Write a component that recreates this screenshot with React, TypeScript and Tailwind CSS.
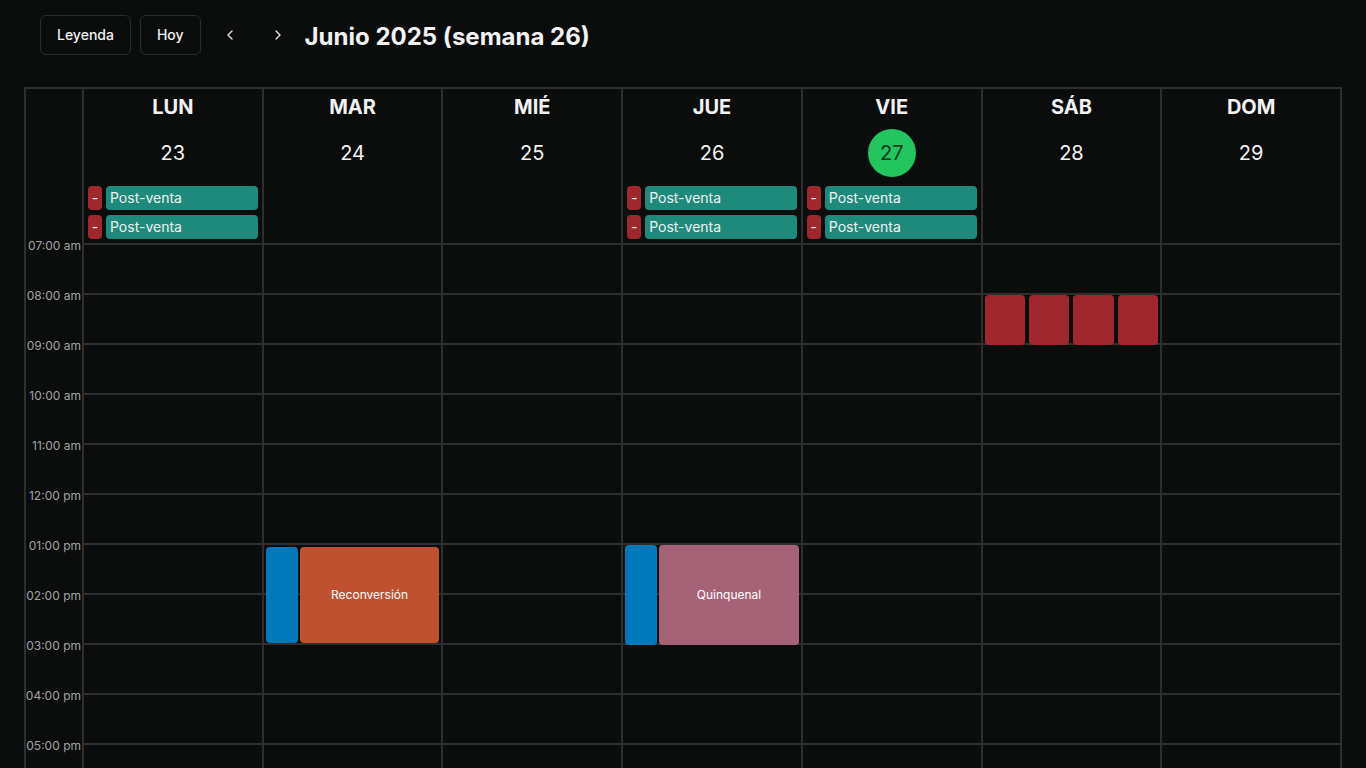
import { ChevronLeft, ChevronRight } from 'lucide-react';

const days = [
  { name: 'LUN', num: 23, allDay: 2 },
  { name: 'MAR', num: 24, allDay: 0 },
  { name: 'MIÉ', num: 25, allDay: 0 },
  { name: 'JUE', num: 26, allDay: 2 },
  { name: 'VIE', num: 27, allDay: 2, today: true },
  { name: 'SÁB', num: 28, allDay: 0 },
  { name: 'DOM', num: 29, allDay: 0 }
];

const hours = [
  '07:00 am', '08:00 am', '09:00 am', '10:00 am', '11:00 am', '12:00 pm',
  '01:00 pm', '02:00 pm', '03:00 pm', '04:00 pm', '05:00 pm', '06:00 pm',
  '07:00 pm', '08:00 pm'
];

const AllDayEvent = () => (
  <div className="flex h-[24px] gap-[4px]">
    <div className="w-[14px] rounded bg-[#a1272f] text-white text-sm flex items-center justify-center">-</div>
    <div className="flex-1 rounded bg-[#1d8a7b] text-[#f2f2f2] text-sm flex items-center pl-[4px]">Post-venta</div>
  </div>
);

// events that sit over the hour grid, keyed by day index and hour index
const renderEvent = (day: number, hour: number) => {
  if (day === 5 && hour === 1) {
    return (
      <div className="absolute left-[2px] right-[2px] top-0 h-[50px] flex gap-[4px] z-10">
        {[0, 1, 2, 3].map((i) => (
          <div key={i} className="flex-1 rounded bg-[#a1272f]"></div>
        ))}
      </div>
    );
  }
  if (day === 1 && hour === 6) {
    return (
      <div className="absolute left-[2px] right-[2px] top-[1.5px] h-[96px] flex gap-[2px] z-10">
        <div className="w-[32px] rounded bg-[#0178b9]"></div>
        <div className="flex-1 rounded bg-[#c05130] text-white text-xs flex items-center justify-center">Reconversión</div>
      </div>
    );
  }
  if (day === 3 && hour === 6) {
    return (
      <div className="absolute left-[2px] right-[2px] top-0 h-[100px] flex gap-[2px] z-10">
        <div className="w-[32px] rounded bg-[#0178b9]"></div>
        <div className="flex-1 rounded bg-[#a66378] text-white text-xs flex items-center justify-center">Quinquenal</div>
      </div>
    );
  }
  return null;
};

const App = () => {
  return (
    <div
      className="h-[768px] overflow-hidden bg-[#0b0d0d] px-6 pt-[15px] text-[#f2f2f2]"
      style={{ fontFamily: 'Inter, "Noto Sans", sans-serif' }}
    >
      {/* Toolbar */}
      <div className="flex items-center gap-[9px] pl-4 h-10">
        <button className="h-10 px-4 rounded-md border border-[#2a2c2c] bg-[#0b0d0d] text-sm font-medium">Leyenda</button>
        <button className="h-10 px-4 rounded-md border border-[#2a2c2c] bg-[#0b0d0d] text-sm font-medium">Hoy</button>
        <button className="h-10 w-10 flex items-center justify-center text-[#e5e5e5]">
          <ChevronLeft size={16} />
        </button>
        <button className="h-10 w-10 -ml-[1px] flex items-center justify-center text-[#e5e5e5]">
          <ChevronRight size={16} />
        </button>
        <h1 className="-ml-[2px] mt-1 text-2xl font-bold">Junio 2025 (semana 26)</h1>
      </div>

      {/* Calendar */}
      <div className="mt-8 bg-[#2e3030] p-[2px] flex gap-[2px]">
        {/* Time gutter */}
        <div className="w-[56px] shrink-0 bg-[#0b0d0d] flex flex-col">
          <div className="h-[154px]"></div>
          {hours.map((h) => (
            <div key={h} className="relative h-[50px]">
              <span className="absolute right-[1px] -top-[5px] text-xs text-[#a3a3a3] whitespace-nowrap">{h}</span>
            </div>
          ))}
        </div>

        {/* Days */}
        <div className="flex-1 grid grid-cols-7 gap-[2px]">
          {days.map((d) => (
            <div key={d.name} className="h-[154px] bg-[#0b0d0d] flex flex-col px-[4px] pt-[4px] pb-[4px]">
              <div className="text-xl font-bold leading-7 text-center">{d.name}</div>
              <div className="mt-[8px] h-12 flex items-center justify-center">
                {d.today ? (
                  <div className="w-12 h-12 rounded-full bg-[#22c55e] text-[#0f3b20] text-xl flex items-center justify-center">{d.num}</div>
                ) : (
                  <span className="text-xl">{d.num}</span>
                )}
              </div>
              <div className="mt-[9px] flex flex-col gap-[5px]">
                {Array.from({ length: d.allDay }).map((_, i) => (
                  <AllDayEvent key={i} />
                ))}
              </div>
            </div>
          ))}
          {hours.map((h, hi) =>
            days.map((d, di) => (
              <div key={h + d.name} className="relative h-12 bg-[#0b0d0d]">
                {renderEvent(di, hi)}
              </div>
            ))
          )}
        </div>
      </div>
    </div>
  );
};

export default App;
